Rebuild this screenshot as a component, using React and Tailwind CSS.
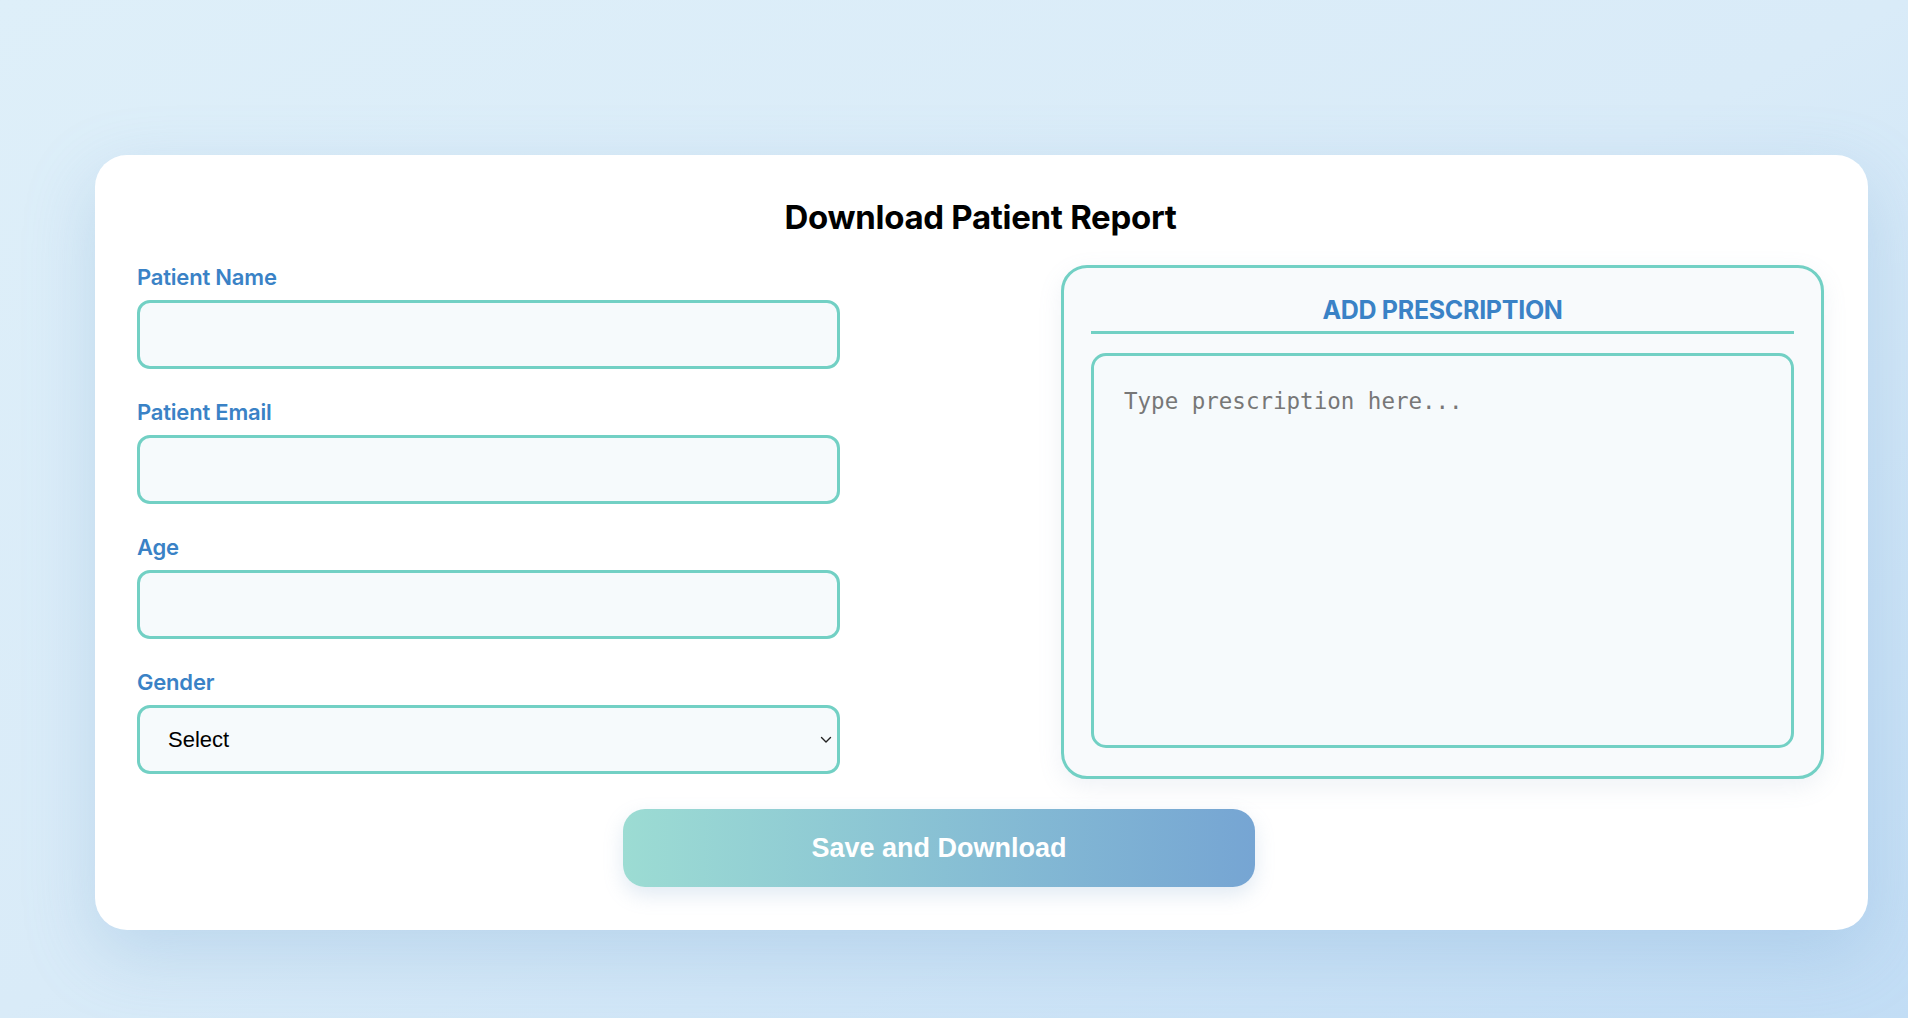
import React, { useState } from 'react';

const Field = ({ label, children }) => (
    <div className="flex flex-col">
        <label className="text-[22px] leading-[26px] font-semibold text-[#3a82c6] mb-[10px] tracking-[-0.2px]">{label}</label>
        {children}
    </div>
);

const inputClass =
    'w-full h-[69px] rounded-[13px] border-[3px] border-[#72d0c4] bg-[#f6fafc] px-[28px] text-[22px] text-black outline-none';

const App = () => {
    const [name, setName] = useState('');
    const [email, setEmail] = useState('');
    const [age, setAge] = useState('');
    const [gender, setGender] = useState('');
    const [prescription, setPrescription] = useState('');

    return (
        <div className="min-h-screen w-full bg-gradient-to-br from-[#deeff9] via-[#d9ebf8] to-[#c2ddf5] pt-[155px] pl-[95px] font-['Inter',sans-serif]">
            <div className="w-[1773px] h-[775px] bg-white rounded-[32px] shadow-[0_24px_70px_rgba(110,160,210,0.28)] pl-[42px] pr-[44px] pt-[40px]">
                <h1 className="text-center text-[33px] leading-[44px] font-bold text-black tracking-[-0.3px]">
                    Download Patient Report
                </h1>

                <div className="mt-[25px] flex justify-between items-start">
                    <div className="w-[703px] flex flex-col gap-[30px]">
                        <Field label="Patient Name">
                            <input className={inputClass} value={name} onChange={(e) => setName(e.target.value)} />
                        </Field>
                        <Field label="Patient Email">
                            <input className={inputClass} value={email} onChange={(e) => setEmail(e.target.value)} />
                        </Field>
                        <Field label="Age">
                            <input className={inputClass} value={age} onChange={(e) => setAge(e.target.value)} />
                        </Field>
                        <Field label="Gender">
                            <div className="relative">
                                <select
                                    className={inputClass + " appearance-none font-['Liberation_Sans',Arial,sans-serif]"}
                                    value={gender}
                                    onChange={(e) => setGender(e.target.value)}
                                >
                                    <option value="">Select</option>
                                    <option value="male">Male</option>
                                    <option value="female">Female</option>
                                    <option value="other">Other</option>
                                </select>
                                <svg
                                    className="absolute right-[8px] top-1/2 -translate-y-1/2 pointer-events-none"
                                    width="12"
                                    height="8"
                                    viewBox="0 0 12 8"
                                    fill="none"
                                >
                                    <path d="M1.5 1.5 L6 6 L10.5 1.5" stroke="#222" strokeWidth="1.4" strokeLinecap="round" strokeLinejoin="round" />
                                </svg>
                            </div>
                        </Field>
                    </div>

                    <div className="mt-[1px] w-[763px] h-[514px] rounded-[26px] border-[3px] border-[#72d0c4] bg-[#f8fafc] shadow-[0_8px_24px_rgba(120,150,180,0.12)] px-[27px] pt-[27px] pb-[28px] flex flex-col">
                        <h2 className="text-center text-[25px] leading-[30px] font-bold text-[#3a82c6] tracking-[-0.3px] pb-[6px] border-b-[3px] border-[#72d0c4]">
                            ADD PRESCRIPTION
                        </h2>
                        <textarea
                            className="mt-[19px] flex-1 w-full resize-none rounded-[15px] border-[3px] border-[#72d0c4] bg-[#f6fafc] px-[30px] py-[31px] text-[22.5px] leading-[28px] font-['DejaVu_Sans_Mono',monospace] text-[#333] placeholder-[#777] outline-none"
                            placeholder="Type prescription here..."
                            value={prescription}
                            onChange={(e) => setPrescription(e.target.value)}
                        />
                    </div>
                </div>

                <div className="mt-[30px] pl-[486px]">
                    <button className="w-[632px] h-[78px] rounded-[22px] bg-gradient-to-r from-[#9cdcd3] to-[#76a5d3] text-white text-[27px] font-bold font-['Liberation_Sans',Arial,sans-serif] shadow-[0_8px_20px_rgba(120,160,200,0.22)]">
                        Save and Download
                    </button>
                </div>
            </div>
        </div>
    );
};

export default App;
